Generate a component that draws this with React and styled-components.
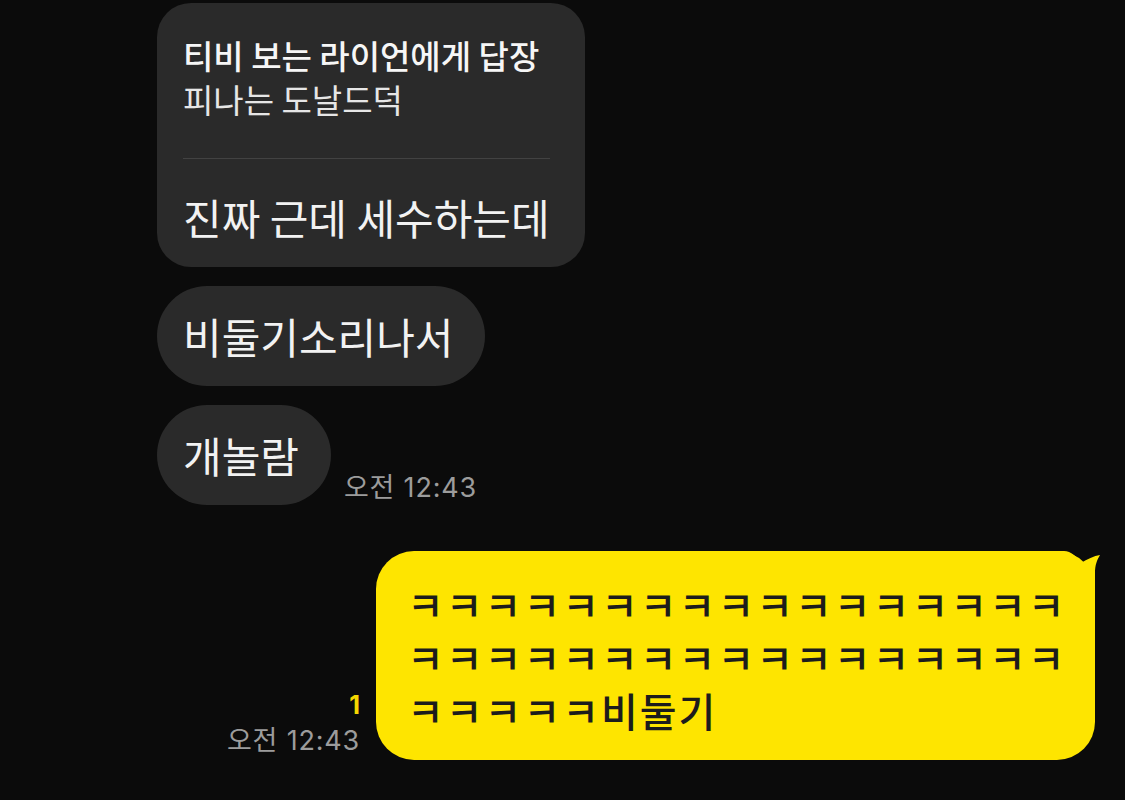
import React from "react";
import styled, { createGlobalStyle } from "styled-components";

const GlobalStyle = createGlobalStyle`
  html, body {
    margin: 0;
    padding: 0;
    background: #0b0b0b;
  }
  body {
    font-family: "Noto Sans CJK KR", "Noto Sans", sans-serif;
    -webkit-font-smoothing: antialiased;
  }
`;

const received = [
  { id: 1, text: "비둘기소리나서" },
  { id: 2, text: "개놀람", time: "오전 12:43" },
];

const sentLines = [
  "ㅋㅋㅋㅋㅋㅋㅋㅋㅋㅋㅋㅋㅋㅋㅋㅋㅋ",
  "ㅋㅋㅋㅋㅋㅋㅋㅋㅋㅋㅋㅋㅋㅋㅋㅋㅋ",
  "ㅋㅋㅋㅋㅋ비둘기",
];

const App = () => {
  return (
    <Page>
      <GlobalStyle />
      <Received>
        <Bubble>
          <ReplyHead>
            <ReplyTitle>티비 보는 라이언에게 답장</ReplyTitle>
            <ReplyQuote>피나는 도날드덕</ReplyQuote>
          </ReplyHead>
          <Divider />
          <BubbleText>진짜 근데 세수하는데</BubbleText>
        </Bubble>

        {received.map((m) => (
          <Row key={m.id}>
            <Bubble pill>
              <BubbleText>{m.text}</BubbleText>
            </Bubble>
            {m.time && <Time>{m.time}</Time>}
          </Row>
        ))}
      </Received>

      <SentRow>
        <Meta>
          <Unread>1</Unread>
          <Time>오전 12:43</Time>
        </Meta>
        <SentBubble>
          {/* tail sits under the text, so it goes first */}
          <Tail width="52" height="62" viewBox="0 0 52 62">
            <path
              d="M0,0 L15,0 C22,0 28,6 32,12 C38,8 45,5 51,4 C48,9 46,14 46,22 L46,62 L0,62 Z"
              fill="#fee500"
            />
          </Tail>
          {sentLines.map((line, i) => (
            <SentLine key={i}>{line}</SentLine>
          ))}
        </SentBubble>
      </SentRow>
    </Page>
  );
};

export default App;

const Page = styled.div`
  width: 1125px;
  height: 800px;
  overflow: hidden;
  padding: 3px 30px 0 157px;
  box-sizing: border-box;
  display: flex;
  flex-direction: column;
`;

const Received = styled.div`
  display: flex;
  flex-direction: column;
  align-items: flex-start;
  gap: 19px;
`;

const Row = styled.div`
  display: flex;
  align-items: flex-end;
  gap: 13px;
`;

const Bubble = styled.div`
  background: #2a2a2a;
  color: #f2f2f2;
  border-radius: ${({ pill }) => (pill ? "50px" : "34px")};
  padding: ${({ pill }) => (pill ? "25px 32px 25px 26px" : "30px 35px 25px 26px")};
  display: flex;
  flex-direction: column;
`;

const ReplyHead = styled.div`
  display: flex;
  flex-direction: column;
  font-size: 33px;
  line-height: 44px;
`;

const ReplyTitle = styled.div`
  font-weight: 500;
  color: #f6f6f6;
`;

const ReplyQuote = styled.div`
  font-weight: 400;
  color: #e6e6e6;
`;

const Divider = styled.div`
  height: 1px;
  background: #424242;
  margin: 37px 0 33px;
`;

const BubbleText = styled.div`
  font-size: 42px;
  line-height: 50px;
  white-space: nowrap;
`;

const Time = styled.div`
  font-family: Inter, "Noto Sans CJK KR", sans-serif;
  font-size: 27px;
  line-height: 30px;
  letter-spacing: 0.8px;
  color: #9c9c9c;
  white-space: nowrap;
  padding-bottom: 2px;
`;

const SentRow = styled.div`
  display: flex;
  justify-content: flex-end;
  align-items: flex-end;
  gap: 16px;
  margin-top: 46px;
`;

const Meta = styled.div`
  display: flex;
  flex-direction: column;
  align-items: flex-end;
  padding-bottom: 2px;
`;

const Unread = styled.div`
  font-family: Inter, sans-serif;
  font-size: 25px;
  line-height: 30px;
  font-weight: 700;
  color: #f5d800;
  margin-bottom: 6px;
`;

const SentBubble = styled.div`
  position: relative;
  background: #fee500;
  color: #1c1c1c;
  border-radius: 38px;
  padding: 27px 30px 23px 31px;
  width: 658px;
`;

const SentLine = styled.div`
  position: relative;
  font-size: 40px;
  line-height: 53px;
  font-weight: 500;
  letter-spacing: 2px;
  white-space: nowrap;
`;

const Tail = styled.svg`
  position: absolute;
  top: 0;
  right: -6px;
  display: block;
`;
